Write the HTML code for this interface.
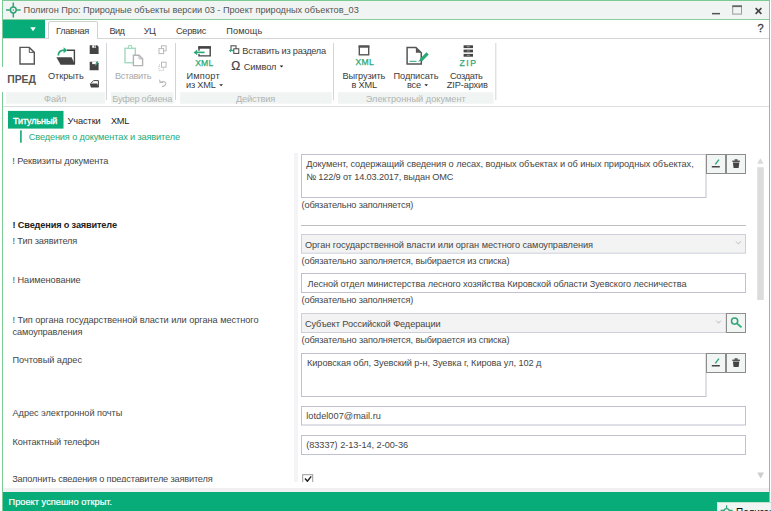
<!DOCTYPE html>
<html lang="ru">
<head>
<meta charset="utf-8">
<title>Полигон Про: Природные объекты версии 03</title>
<style>
*{box-sizing:border-box;margin:0;padding:0}
html,body{width:771px;height:511px;overflow:hidden;background:#fff}
body{position:relative;font-family:"Liberation Sans",sans-serif;font-size:9.2px;color:#3a3a3a;line-height:12px}
.t{position:absolute;white-space:nowrap;line-height:12px}
#gfx{position:absolute;left:0;top:0}
#clip{position:absolute;left:0;top:0;width:771px;height:482px;overflow:hidden}
#ovl{position:absolute;left:717px;top:502px;width:54px;height:9px;overflow:hidden;background:#f1f5f3;border-top:1px solid #bfe3cc;border-left:1px solid #d6e9dc}
</style>
</head>
<body>
<svg id="gfx" width="771" height="511" viewBox="0 0 771 511">
<!-- window frame -->
<rect x="2" y="0" width="768" height="511" fill="#7ccb95"/>
<rect x="3" y="1" width="766" height="510" fill="#fff"/>
<rect x="0" y="67" width="40" height="25" fill="#fff"/>
<!-- title bar -->
<rect x="3" y="1" width="766" height="18" fill="#f0f4f2"/>
<rect x="3" y="19" width="766" height="1" fill="#86cc9c"/>
<g stroke="#33a477" fill="none" stroke-width="1.5"><circle cx="13.3" cy="10" r="2.9"/><path d="M13.3 2.6v4.6M13.3 12.8v4.6M6 10h4.5M16.1 10h4.5"/></g>
<circle cx="13.3" cy="10" r="0.8" fill="#33a477"/>
<rect x="712" y="12.9" width="8" height="1.5" fill="#555"/>
<rect x="732.7" y="6.3" width="8.8" height="7.8" fill="none" stroke="#9a9a9a" stroke-width="1"/>
<rect x="732.2" y="5.3" width="9.8" height="1.8" fill="#666"/>
<path d="M755.6 8.2l5.8 5.6M761.4 8.2l-5.8 5.6" stroke="#444" stroke-width="1.6" fill="none"/>
<!-- menu row -->
<rect x="3" y="20" width="42" height="18" fill="#07ac79"/>
<path d="M30.2 27.3h5.6l-2.8 3.9z" fill="#fff"/>
<rect x="3" y="38" width="766" height="1" fill="#d3d6d4"/>
<path d="M48.5 39V23q0-1.5 1.5-1.5h46q1.5 0 1.5 1.5V39" fill="#fff" stroke="#cfd2d0" stroke-width="1"/>
<!-- ribbon groups -->
<g fill="#f0f4f2"><rect x="6" y="92.2" width="99" height="11.5"/><rect x="111" y="92.2" width="62.5" height="11.5"/><rect x="180" y="92.2" width="151.7" height="11.5"/><rect x="338" y="92.2" width="155.5" height="11.5"/></g>
<g fill="#d3d3dc"><rect x="106" y="43" width="1" height="57"/><rect x="175" y="43" width="1" height="57"/><rect x="333" y="43" width="1" height="57"/><rect x="495.3" y="43" width="1" height="57"/></g>
<rect x="3" y="106" width="766" height="1" fill="#dddfde"/>
<!-- new doc -->
<path d="M20 47.4h9.3l5 5V64H20z" fill="#fff" stroke="#555" stroke-width="1.4" stroke-linejoin="miter"/>
<path d="M29.3 47.4v5h5" fill="none" stroke="#555" stroke-width="1"/>
<!-- open -->
<path d="M67 50.2h7.4v14" fill="none" stroke="#444" stroke-width="1.4"/>
<path d="M56.4 57.3h15.2l3.4 7.4H60.6z" fill="#444"/>
<path d="M58.3 55.6c0-3.6 2-5.4 6.4-5.4" fill="none" stroke="#2aa876" stroke-width="1.7"/>
<path d="M63.6 47.2l3.8 3-3.8 3z" fill="#2aa876"/>
<!-- save small -->
<path d="M89.7 45.3h7.4l1.5 1.5v7.1h-8.9z" fill="#444"/><rect x="92.2" y="45.3" width="3.8" height="2.4" fill="#fff"/><rect x="94.3" y="45.6" width="1.1" height="1.7" fill="#444"/>
<!-- save as small -->
<path d="M89.7 61.7h7.4l1.5 1.5v7.1h-8.9z" fill="#444"/><rect x="92.2" y="61.7" width="3.8" height="2.4" fill="#fff"/><path d="M95.2 65.4l2.8-4" stroke="#3cae80" stroke-width="1.5"/>
<!-- open small -->
<path d="M91 83.2l2.6-2.6h4.8v6.6" fill="none" stroke="#444" stroke-width="1"/><path d="M89.7 83.4h7.6l1.2 4h-7.6z" fill="#444"/>
<!-- paste (disabled) -->
<rect x="125" y="48.3" width="10.3" height="14.4" fill="none" stroke="#a3d9be" stroke-width="1.4"/>
<circle cx="130.1" cy="47" r="1.7" fill="#fff" stroke="#a3d9be" stroke-width="1.2"/>
<path d="M133.4 55.2h5.6l3.6 3.6v6.8h-9.2z" fill="#fff" stroke="#b3b3b3" stroke-width="1.4"/>
<path d="M139 55.2v3.6h3.6" fill="none" stroke="#b3b3b3" stroke-width="1"/>
<!-- copy / cut / undo (disabled) -->
<g fill="#fff" stroke="#b9b9b9" stroke-width="1"><rect x="161.5" y="45.8" width="4.6" height="5"/><rect x="159" y="48.6" width="4.6" height="5"/></g>
<g fill="#fff" stroke="#b9b9b9" stroke-width="1"><rect x="159" y="65" width="4.6" height="5.4" stroke-dasharray="1 1"/><rect x="161.5" y="62.2" width="4.6" height="5"/></g>
<path d="M160.4 82.2c3-1.6 5.6-0.4 5.4 1.6c-0.2 1.6-1.6 2.6-3.8 2.8M159.6 79.6l0.5 3 3.1-0.4" fill="none" stroke="#b9b9b9" stroke-width="1.1"/>
<!-- import xml -->
<path d="M199 55.9h11.2V47h-11.2z" fill="#fff" stroke="#444" stroke-width="1.4"/><rect x="198.3" y="46.3" width="12.6" height="2.4" fill="#444"/>
<path d="M205.2 52.4h-9.6" stroke="#fff" stroke-width="3.4"/><path d="M204.6 52.4h-9" stroke="#2aa876" stroke-width="1.6"/><path d="M193.6 52.4l3.6-2.8v5.6z" fill="#2aa876"/>
<!-- insert from section small -->
<g fill="#fff" stroke="#444" stroke-width="1"><rect x="231" y="45.8" width="5" height="4.6"/><rect x="233.8" y="48.8" width="5" height="4.6"/></g>
<path d="M233.6 50.6h-4.2" stroke="#2aa876" stroke-width="1.2"/><path d="M229 50.6l2-1.6v3.2z" fill="#2aa876"/>
<!-- dropdown arrows -->
<g fill="#222"><path d="M219.3 84.2h3.6l-1.8 2.1z"/><path d="M279.7 65.4h3.6l-1.8 2.1z"/><path d="M424.4 84.2h3.6l-1.8 2.1z"/></g>
<!-- export xml -->
<rect x="359.3" y="46.4" width="9.4" height="8.4" fill="#fff" stroke="#555" stroke-width="1.4"/><rect x="358.6" y="45.3" width="10.8" height="2.4" fill="#555"/>
<!-- sign all -->
<path d="M407.1 47.4h8.8l5.4 5.4V63.9h-14.2z" fill="#fff" stroke="#555" stroke-width="1.5"/>
<path d="M415.9 47.4v5.4h5.4z" fill="#555"/>
<path d="M409.5 61.3h7" stroke="#2aa876" stroke-width="1"/>
<path d="M427.6 53.4l-6.6 6.8" stroke="#2aa876" stroke-width="3.2"/><path d="M420.6 58.4l-2.6 3.6 3.8-1.6z" fill="#2aa876"/>
<!-- zip -->
<g fill="#444"><rect x="463.6" y="45.3" width="9.4" height="2.8"/><rect x="463.6" y="49.6" width="9.4" height="2.8"/><rect x="463.6" y="53.9" width="9.4" height="2.8"/></g>
<g fill="#999"><rect x="466.8" y="46.2" width="3" height="1"/><rect x="466.8" y="50.5" width="3" height="1"/><rect x="466.8" y="54.8" width="3" height="1"/></g>

<!-- page tabs -->
<rect x="8" y="110.9" width="55.5" height="17.7" fill="#07ac79"/>
<rect x="20" y="130.3" width="1.8" height="12.4" fill="#2bb27f"/>
<!-- status -->
<rect x="3" y="488" width="766" height="4" fill="#f0f0f3"/>
<rect x="3" y="492" width="766" height="19" fill="#07ac79"/>
<!-- scrollbar -->
<path d="M757.2 163.8h6.4l-3.2-5.6z" fill="#d9d9d9"/>
<rect x="757.2" y="167.2" width="6.6" height="132.8" fill="#dcdcdc"/>
<path d="M757.2 472.4h6.8l-3.4 6z" fill="#cdcdcd"/>
</svg>
<div id="clip">
<svg width="771" height="511" viewBox="0 0 771 511" style="position:absolute;left:0;top:0">
<rect x="294" y="153" width="4" height="340" fill="#f4f3f5"/>
<rect x="301" y="225" width="445" height="1" fill="#bfbfbf"/>
<g fill="#fff" stroke="#c0c0ce" stroke-width="1">
<rect x="301.5" y="154.5" width="404.5" height="43"/>
<rect x="301.5" y="273.5" width="444" height="19"/>
<rect x="301.5" y="353.5" width="404.5" height="43"/>
<rect x="301.5" y="406.5" width="444" height="18.5"/>
<rect x="301.5" y="435.5" width="444" height="19"/>
</g>
<g fill="#f3f3f3" stroke="#cdd0da" stroke-width="1">
<rect x="301.5" y="234.5" width="444" height="18.7"/>
<rect x="301.5" y="313.5" width="424.5" height="19"/>
</g>
<g fill="#f1f5f3" stroke="#8c8c8c" stroke-width="1">
<rect x="706.5" y="154.5" width="19" height="19"/><rect x="726.5" y="154.5" width="19" height="19"/>
<rect x="706.5" y="353.5" width="19" height="19"/><rect x="726.5" y="353.5" width="19" height="19"/>
<rect x="726.5" y="313.5" width="19" height="19"/>
</g>
<!-- chevrons -->
<path d="M736 241.5l2.4 2.4 2.4-2.4" fill="none" stroke="#b4b9bb" stroke-width="1"/>
<path d="M716.3 320.7l2.3 2.4 2.3-2.4" fill="none" stroke="#b4b9bb" stroke-width="1"/>
<!-- edit / trash icons -->
<g id="ed1"><path d="M718.9 159.6l-3.6 4.8" stroke="#2fa878" stroke-width="1.45" fill="none"/><rect x="711.8" y="166" width="8" height="1.5" fill="#444"/></g>
<g id="tr1" fill="#444"><rect x="732.3" y="160.6" width="7.6" height="1.3"/><rect x="734.6" y="159.3" width="3" height="1.5"/><path d="M732.9 162.6h6.4l-0.7 5.4h-5z"/></g>
<g transform="translate(0,199)"><path d="M718.9 159.6l-3.6 4.8" stroke="#2fa878" stroke-width="1.45" fill="none"/><rect x="711.8" y="166" width="8" height="1.5" fill="#444"/></g>
<g transform="translate(0,199)" fill="#444"><rect x="732.3" y="160.6" width="7.6" height="1.3"/><rect x="734.6" y="159.3" width="3" height="1.5"/><path d="M732.9 162.6h6.4l-0.7 5.4h-5z"/></g>
<!-- search -->
<circle cx="734.6" cy="321.1" r="3.1" fill="none" stroke="#2fa577" stroke-width="1.5"/><path d="M736.9 323.3l4.6 4" stroke="#2fa577" stroke-width="1.7" fill="none"/>
<!-- checkbox -->
<rect x="302.7" y="474.7" width="10" height="10" fill="#fff" stroke="#9a9a9a" stroke-width="1"/>
<path d="M305 478.6l2.4 2.6 3.8-4.8" fill="none" stroke="#222" stroke-width="1.5"/>
</svg>
<div class="t" style="left:12.2px;top:472.9px;font-size:9.2px;letter-spacing:-0.162px;color:#454545">Заполнить сведения о представителе заявителя</div>
</div>
<div class="t" style="left:23.6px;top:4.1px;font-size:9.2px;letter-spacing:-0.030px;color:#555">Полигон Про: Природные объекты версии 03 - Проект природных объектов_03</div>
<div class="t" style="left:56.0px;top:25.0px;font-size:9.2px;letter-spacing:-0.278px;color:#3b3b3b">Главная</div>
<div class="t" style="left:109.5px;top:25.0px;font-size:9.2px;letter-spacing:-0.662px;color:#3b3b3b">Вид</div>
<div class="t" style="left:143.7px;top:25.0px;font-size:9.2px;letter-spacing:-0.441px;color:#3b3b3b">УЦ</div>
<div class="t" style="left:175.9px;top:25.0px;font-size:9.2px;letter-spacing:-0.214px;color:#3b3b3b">Сервис</div>
<div class="t" style="left:226.2px;top:25.0px;font-size:9.2px;letter-spacing:0.120px;color:#3b3b3b">Помощь</div>
<div class="t" style="left:7.3px;top:74.1px;font-size:10.4px;letter-spacing:-0.078px;color:#555;font-weight:bold">ПРЕД</div>
<div class="t" style="left:48.0px;top:69.6px;font-size:9.2px;letter-spacing:-0.049px;color:#3b3b3b">Открыть</div>
<div class="t" style="left:114.9px;top:69.6px;font-size:9.2px;letter-spacing:-0.336px;color:#a9a9a9">Вставить</div>
<div class="t" style="left:186.5px;top:69.9px;font-size:9.2px;letter-spacing:0.215px;color:#3b3b3b">Импорт</div>
<div class="t" style="left:186.0px;top:79.1px;font-size:9.2px;letter-spacing:-0.199px;color:#3b3b3b">из XML</div>
<div class="t" style="left:242.3px;top:44.5px;font-size:9.2px;letter-spacing:-0.242px;color:#3b3b3b">Вставить из раздела</div>
<div class="t" style="left:243.8px;top:60.6px;font-size:9.2px;letter-spacing:-0.128px;color:#3b3b3b">Символ</div>
<div class="t" style="left:342.5px;top:69.9px;font-size:9.2px;letter-spacing:-0.154px;color:#3b3b3b">Выгрузить</div>
<div class="t" style="left:351.5px;top:79.1px;font-size:9.2px;letter-spacing:-0.207px;color:#3b3b3b">в XML</div>
<div class="t" style="left:393.5px;top:69.9px;font-size:9.2px;letter-spacing:-0.061px;color:#3b3b3b">Подписать</div>
<div class="t" style="left:407.1px;top:79.1px;font-size:9.2px;letter-spacing:-0.292px;color:#3b3b3b">все</div>
<div class="t" style="left:450.1px;top:69.9px;font-size:9.2px;letter-spacing:-0.370px;color:#3b3b3b">Создать</div>
<div class="t" style="left:446.7px;top:79.1px;font-size:9.2px;letter-spacing:-0.097px;color:#3b3b3b">ZIP-архив</div>
<div class="t" style="left:44.1px;top:92.5px;font-size:9.2px;letter-spacing:-0.131px;color:#b0b4b2">Файл</div>
<div class="t" style="left:112.3px;top:92.5px;font-size:9.2px;letter-spacing:-0.222px;color:#b0b4b2">Буфер обмена</div>
<div class="t" style="left:236.0px;top:92.5px;font-size:9.2px;letter-spacing:-0.138px;color:#b0b4b2">Действия</div>
<div class="t" style="left:365.8px;top:92.5px;font-size:9.2px;letter-spacing:0.019px;color:#b0b4b2">Электронный документ</div>
<div class="t" style="left:13.0px;top:114.5px;font-size:9.0px;letter-spacing:-0.095px;color:#fff;-webkit-text-stroke:0.35px #fff">Титульный</div>
<div class="t" style="left:67.5px;top:114.5px;font-size:9.2px;letter-spacing:-0.081px;color:#222">Участки</div>
<div class="t" style="left:111.0px;top:114.5px;font-size:9.2px;letter-spacing:-0.303px;color:#222">XML</div>
<div class="t" style="left:28.8px;top:131.3px;font-size:9.2px;letter-spacing:-0.132px;color:#1aab78">Сведения о документах и заявителе</div>
<div class="t" style="left:12.3px;top:154.7px;font-size:9.2px;letter-spacing:-0.069px;color:#454545">! Реквизиты документа</div>
<div class="t" style="left:12.5px;top:218.7px;font-size:9.2px;letter-spacing:-0.155px;color:#222;font-weight:bold">! Сведения о заявителе</div>
<div class="t" style="left:12.5px;top:234.9px;font-size:9.2px;letter-spacing:-0.124px;color:#454545">! Тип заявителя</div>
<div class="t" style="left:12.5px;top:273.9px;font-size:9.2px;letter-spacing:-0.046px;color:#454545">! Наименование</div>
<div class="t" style="left:12.5px;top:314.2px;font-size:9.2px;letter-spacing:-0.041px;color:#454545">! Тип органа государственной власти или органа местного</div>
<div class="t" style="left:12.5px;top:326.2px;font-size:9.2px;letter-spacing:-0.088px;color:#454545">самоуправления</div>
<div class="t" style="left:12.5px;top:353.8px;font-size:9.2px;letter-spacing:-0.036px;color:#454545">Почтовый адрес</div>
<div class="t" style="left:12.5px;top:406.9px;font-size:9.2px;letter-spacing:-0.045px;color:#454545">Адрес электронной почты</div>
<div class="t" style="left:12.5px;top:435.7px;font-size:9.2px;letter-spacing:-0.140px;color:#454545">Контактный телефон</div>
<div class="t" style="left:306.2px;top:158.0px;font-size:9.2px;letter-spacing:-0.058px;color:#454545">Документ, содержащий сведения о лесах, водных объектах и об иных природных объектах,</div>
<div class="t" style="left:306.2px;top:170.5px;font-size:9.2px;letter-spacing:-0.143px;color:#454545">№ 122/9 от 14.03.2017, выдан ОМС</div>
<div class="t" style="left:301.5px;top:198.9px;font-size:9.2px;letter-spacing:-0.145px;color:#454545">(обязательно заполняется)</div>
<div class="t" style="left:304.9px;top:238.8px;font-size:9.2px;letter-spacing:-0.042px;color:#454545">Орган государственной власти или орган местного самоуправления</div>
<div class="t" style="left:301.5px;top:254.9px;font-size:9.2px;letter-spacing:-0.129px;color:#454545">(обязательно заполняется, выбирается из списка)</div>
<div class="t" style="left:307.5px;top:277.5px;font-size:9.2px;letter-spacing:-0.082px;color:#454545">Лесной отдел министерства лесного хозяйства Кировской области Зуевского лесничества</div>
<div class="t" style="left:301.5px;top:293.9px;font-size:9.2px;letter-spacing:-0.145px;color:#454545">(обязательно заполняется)</div>
<div class="t" style="left:304.9px;top:317.5px;font-size:9.2px;letter-spacing:-0.083px;color:#454545">Субъект Российской Федерации</div>
<div class="t" style="left:301.5px;top:334.1px;font-size:9.2px;letter-spacing:-0.129px;color:#454545">(обязательно заполняется, выбирается из списка)</div>
<div class="t" style="left:307.0px;top:357.1px;font-size:9.2px;letter-spacing:-0.057px;color:#454545">Кировская обл, Зуевский р-н, Зуевка г, Кирова ул, 102 д</div>
<div class="t" style="left:306.2px;top:410.0px;font-size:9.2px;letter-spacing:0.032px;color:#454545">lotdel007@mail.ru</div>
<div class="t" style="left:306.2px;top:438.5px;font-size:9.2px;letter-spacing:-0.034px;color:#454545">(83337) 2-13-14, 2-00-36</div>
<div class="t" style="left:195.2px;top:57.2px;font-size:8.6px;letter-spacing:0.164px;color:#2aa876;-webkit-text-stroke:0.25px #2aa876">XML</div>
<div class="t" style="left:355.5px;top:55.7px;font-size:8.6px;letter-spacing:0.364px;color:#2aa876;-webkit-text-stroke:0.25px #2aa876">XML</div>
<div class="t" style="left:459.5px;top:57.2px;font-size:8.6px;letter-spacing:1.562px;color:#2aa876;-webkit-text-stroke:0.25px #2aa876">ZIP</div>
<div class="t" style="left:757.5px;top:22.4px;font-size:11px;letter-spacing:-0.125px;color:#3a3a3a;-webkit-text-stroke:0.3px #3a3a3a">?</div>
<div class="t" style="left:231.2px;top:60.2px;font-size:12px;letter-spacing:0.816px;color:#444;-webkit-text-stroke:0.2px #444">Ω</div>
<div class="t" style="left:8.5px;top:496.4px;font-size:9.2px;letter-spacing:0.043px;color:#fff;-webkit-text-stroke:0.2px #fff">Проект успешно открыт.</div>
<div id="ovl">
<svg width="14" height="9" viewBox="0 0 14 9" style="position:absolute;left:2px;top:1px"><g stroke="#33a477" fill="none" stroke-width="1.2"><path d="M6.6 1.2v3.4M0.6 6.4h3.6M9 6.4h3.6"/><circle cx="6.6" cy="7.4" r="2.7"/></g></svg>
<div class="t" style="left:18px;top:3.5px;font-size:10px;color:#111">Полигон</div>
</div>

</body>
</html>
